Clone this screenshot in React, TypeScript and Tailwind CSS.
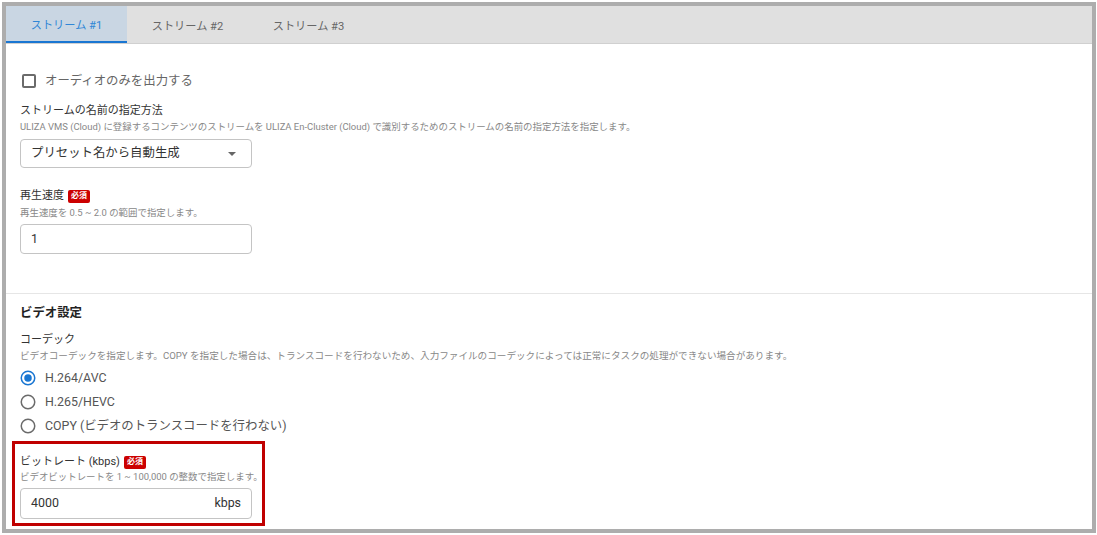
import React, { useState } from "react";

const font = { fontFamily: '"Roboto", "Noto Sans CJK JP", sans-serif' };

function Badge() {
  return (
    <span className="ml-[4px] inline-flex h-[13px] items-center rounded-[2px] bg-[#cc0000] px-[3px] text-[8px] font-bold leading-none text-white">
      必須
    </span>
  );
}

function Radio({ checked, label }: { checked?: boolean; label: string }) {
  return (
    <label className="flex h-[24px] items-center">
      <svg width="18" height="18" viewBox="0 0 24 24" className="ml-[-1px]">
        <circle cx="12" cy="12" r="9" fill="none" stroke={checked ? "#1976d2" : "#6b6b6b"} strokeWidth="2" />
        {checked && <circle cx="12" cy="12" r="5" fill="#1976d2" />}
      </svg>
      <span className="ml-[8px] text-[12.4px] text-[#555]">{label}</span>
    </label>
  );
}

export default function App() {
  const [tab, setTab] = useState(0);
  const tabs = ["ストリーム #1", "ストリーム #2", "ストリーム #3"];

  return (
    <div className="h-[535px] w-[1097px] bg-white pl-[2px] pt-[2px]" style={font}>
      <div className="flex h-[531px] w-[1094px] flex-col border-[4px] border-[#adadad] bg-white">
        {/* tabs */}
        <div className="flex h-[38px] border-b border-[#d0d0d0] bg-[#e0e0e0]">
          {tabs.map((t, i) => (
            <button
              key={t}
              onClick={() => setTab(i)}
              className={`flex h-full w-[121px] items-center justify-center pt-[5px] text-[11.2px] ${
                i === tab ? "border-b-2 border-[#1976d2] bg-[#c9d6e3] text-[#2f86d6]" : "text-[#666]"
              }`}
            >
              {t}
            </button>
          ))}
        </div>

        <div className="flex flex-col">
          <div className="flex flex-col pl-[14px]">
            {/* audio only */}
            <label className="mt-[27px] flex h-[20px] items-center">
              <span className="ml-[2px] h-[14px] w-[14px] rounded-[2px] border-2 border-[#6b6b6b]" />
              <span className="ml-[9px] text-[12.4px] text-[#666]">オーディオのみを出力する</span>
            </label>

            {/* stream name */}
            <div className="mt-[12px] text-[11px] leading-[16px] text-[#333]">ストリームの名前の指定方法</div>
            <div className="mt-[1px] whitespace-nowrap text-[9.45px] leading-[14px] text-[#888]">
              ULIZA VMS (Cloud) に登録するコンテンツのストリームを ULIZA En-Cluster (Cloud) で識別するためのストリームの名前の指定方法を指定します。
            </div>
            <div className="mt-[5px] flex h-[29px] w-[232px] items-center justify-between rounded-[4px] border border-[#c4c4c4] pl-[10px] pr-[15px]">
              <span className="text-[12.4px] text-[#333]">プリセット名から自動生成</span>
              <svg width="8" height="4" viewBox="0 0 8 4">
                <path d="M0 0 L8 0 L4 4 Z" fill="#666" />
              </svg>
            </div>

            {/* speed */}
            <div className="mt-[20px] flex items-center text-[11px] leading-[16px] text-[#333]">
              再生速度
              <Badge />
            </div>
            <div className="mt-[2px] whitespace-nowrap text-[9.45px] leading-[14px] text-[#888]">再生速度を 0.5 ~ 2.0 の範囲で指定します。</div>
            <div className="mt-[4px] flex h-[30px] w-[232px] items-center rounded-[4px] border border-[#c4c4c4] pl-[10px] text-[12.4px] text-[#333]">
              1
            </div>
          </div>

          <div className="mt-[39px] h-px bg-[#e6e6e6]" />

          <div className="flex flex-col pl-[14px]">
            <div className="mt-[10px] text-[12.4px] font-bold leading-[18px] text-[#222]">ビデオ設定</div>
            <div className="mt-[10px] text-[11px] leading-[16px] text-[#333]">コーデック</div>
            <div className="mt-[1px] whitespace-nowrap text-[9.6px] leading-[14px] text-[#888]">
              ビデオコーデックを指定します。COPY を指定した場合は、トランスコードを行わないため、入力ファイルのコーデックによっては正常にタスクの処理ができない場合があります。
            </div>
            <div className="mt-[3px] flex flex-col">
              <Radio checked label="H.264/AVC" />
              <Radio label="H.265/HEVC" />
              <Radio label="COPY (ビデオのトランスコードを行わない)" />
            </div>

            {/* bitrate highlighted */}
            <div className="ml-[-8px] mt-[3px] flex h-[85px] w-[253px] flex-col border-[3px] border-[#c00000] pl-[5px] pt-[10px]">
              <div className="flex items-center text-[11px] leading-[16px] text-[#333]">
                ビットレート (kbps)
                <Badge />
              </div>
              <div className="whitespace-nowrap text-[9.45px] leading-[14px] text-[#888]">ビデオビットレートを 1 ~ 100,000 の整数で指定します。</div>
              <div className="mt-[4px] flex h-[31px] w-[232px] shrink-0 items-center justify-between rounded-[4px] border border-[#c4c4c4] pl-[10px] pr-[10px] text-[12.4px] text-[#333]">
                <span>4000</span>
                <span>kbps</span>
              </div>
            </div>
          </div>
        </div>
      </div>
    </div>
  );
}
